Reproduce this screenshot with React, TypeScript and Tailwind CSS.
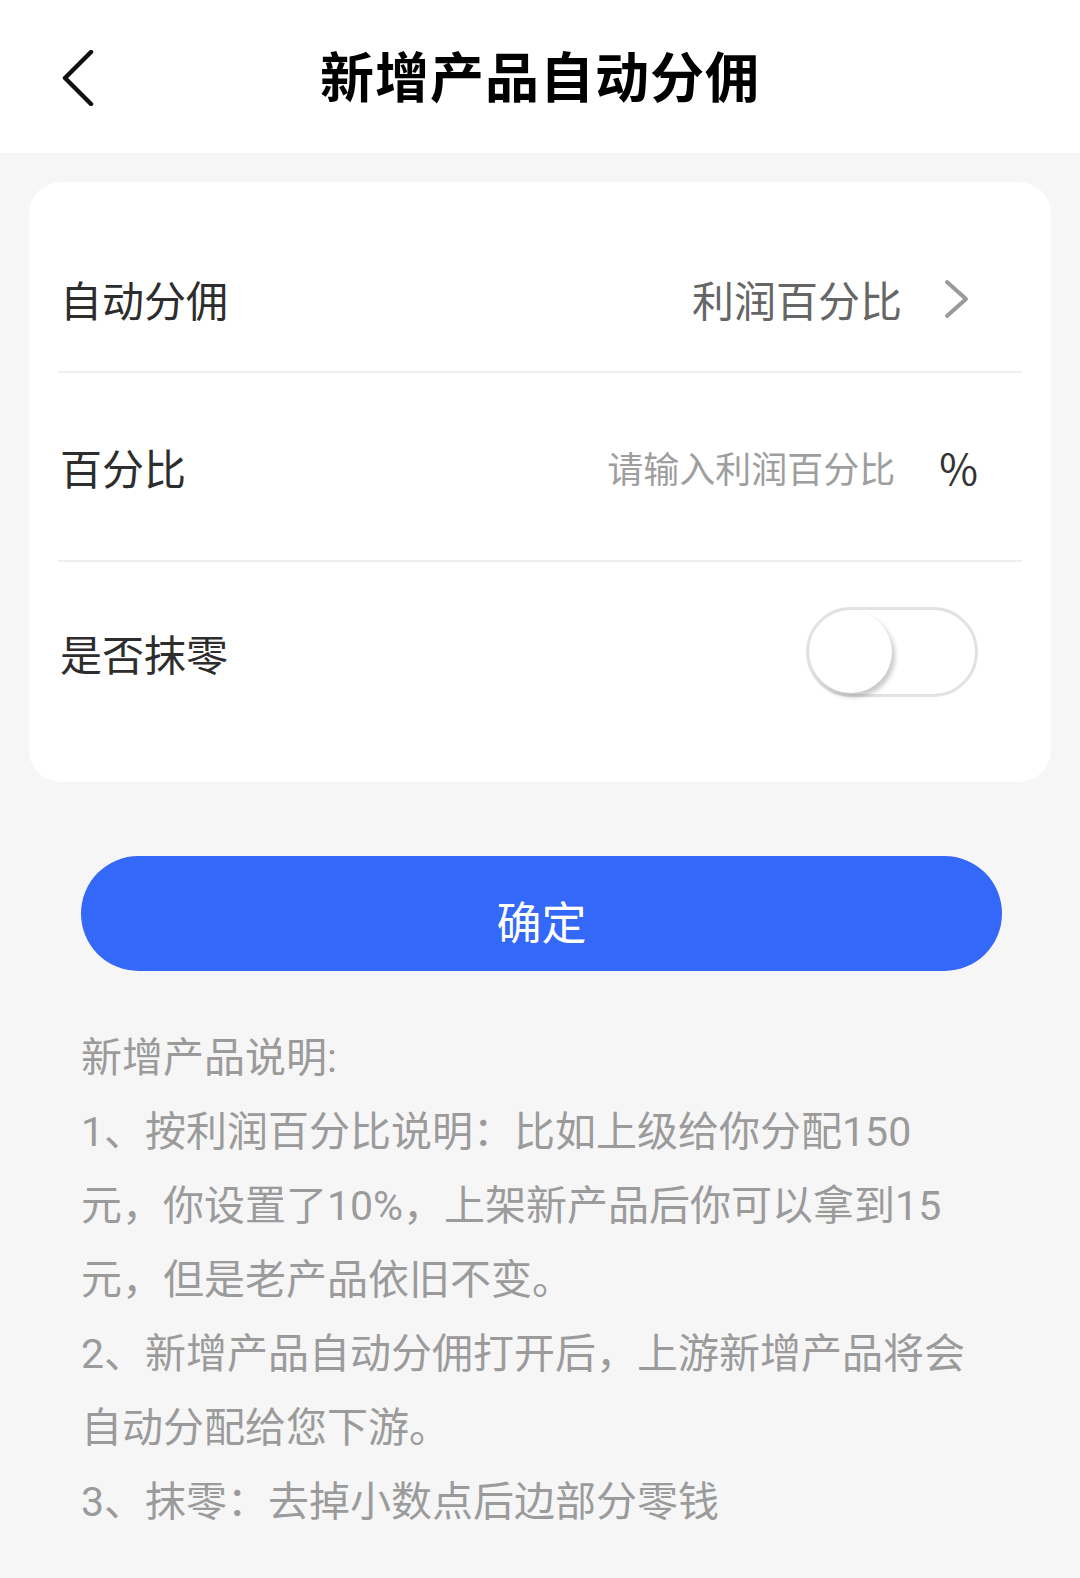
import React, { useState } from 'react';

const font = { fontFamily: '"Noto Sans CJK SC", "Noto Sans", sans-serif' };
const notesFont = { fontFamily: 'Roboto, "Noto Sans CJK SC", "Noto Sans", sans-serif' };

const BackIcon = () => (
  <svg width="34" height="56" viewBox="0 0 34 56" fill="none">
    <path d="M30 2 L4 28 L30 54" stroke="#111" strokeWidth="4.5" strokeLinecap="round" strokeLinejoin="round" />
  </svg>
);

const ChevronRight = () => (
  <svg width="26" height="40" viewBox="0 0 26 40" fill="none">
    <path d="M3 3 L22 20 L3 37" stroke="#9a9a9a" strokeWidth="4" strokeLinecap="round" strokeLinejoin="round" />
  </svg>
);

const Switch = ({ on, onChange }: { on: boolean; onChange: (v: boolean) => void }) => (
  <button
    onClick={() => onChange(!on)}
    className={`relative w-[172px] h-[90px] rounded-full border-[3px] transition ${on ? 'bg-[#3468f8] border-[#3468f8]' : 'bg-white border-[#e2e2e2]'}`}
  >
    <span
      className={`absolute top-[1px] w-[82px] h-[82px] rounded-full bg-white shadow-[3px_4px_5px_rgba(0,0,0,0.22)] transition-all ${on ? 'left-[83px]' : 'left-[1px]'}`}
    />
  </button>
);

export default function App() {
  const [rounding, setRounding] = useState(false);
  const [percent, setPercent] = useState('');

  return (
    <div className="min-h-screen bg-[#f6f6f6]" style={font}>
      {/* header */}
      <div className="relative h-[153px] bg-white flex items-center justify-center">
        <button className="absolute left-[61px] top-[50px]">
          <BackIcon />
        </button>
        <h1 className="text-[54px] font-bold text-black tracking-[1px] -mt-[4px]">新增产品自动分佣</h1>
      </div>

      {/* settings card */}
      <div className="mx-[29px] mt-[29px] bg-white rounded-[32px] px-[29px] pt-[44px] pb-[40px]">
        <div className="h-[147px] flex items-center justify-between border-b-[2px] border-[#efefef] pr-[52px]">
          <span className="text-[42px] text-[#2d2d2d] pl-[2px]">自动分佣</span>
          <div className="flex items-center gap-[42px]">
            <span className="text-[42px] text-[#666]">利润百分比</span>
            <ChevronRight />
          </div>
        </div>

        <div className="h-[189px] flex items-center justify-between border-b-[2px] border-[#efefef] pr-[44px]">
          <span className="text-[42px] text-[#2d2d2d] pl-[2px]">百分比</span>
          <div className="flex items-center gap-[44px]">
            <input
              value={percent}
              onChange={(e) => setPercent(e.target.value)}
              placeholder="请输入利润百分比"
              className="w-[296px] text-right text-[36px] text-[#333] placeholder:text-[#9e9e9e] outline-none bg-transparent"
              style={font}
            />
            <span className="text-[42px] text-[#333]">%</span>
          </div>
        </div>

        <div className="h-[180px] flex items-center justify-between pr-[44px]">
          <span className="text-[42px] text-[#2d2d2d] pl-[2px]">是否抹零</span>
          <Switch on={rounding} onChange={setRounding} />
        </div>
      </div>

      {/* confirm */}
      <div className="px-[81px] pr-[78px] mt-[74px]">
        <button className="w-full h-[115px] rounded-full bg-[#3468f8] text-white text-[45px] pt-[14px]">确定</button>
      </div>

      {/* notes */}
      <div className="pl-[81px] w-[988px] mt-[50px] text-[41px] leading-[74px] text-[#9b9b9b]" style={notesFont}>
        <p>新增产品说明:</p>
        <p>1、按利润百分比说明：比如上级给你分配150元，你设置了10%，上架新产品后你可以拿到15元，但是老产品依旧不变。</p>
        <p>2、新增产品自动分佣打开后，上游新增产品将会自动分配给您下游。</p>
        <p>3、抹零：去掉小数点后边部分零钱</p>
      </div>
    </div>
  );
}
